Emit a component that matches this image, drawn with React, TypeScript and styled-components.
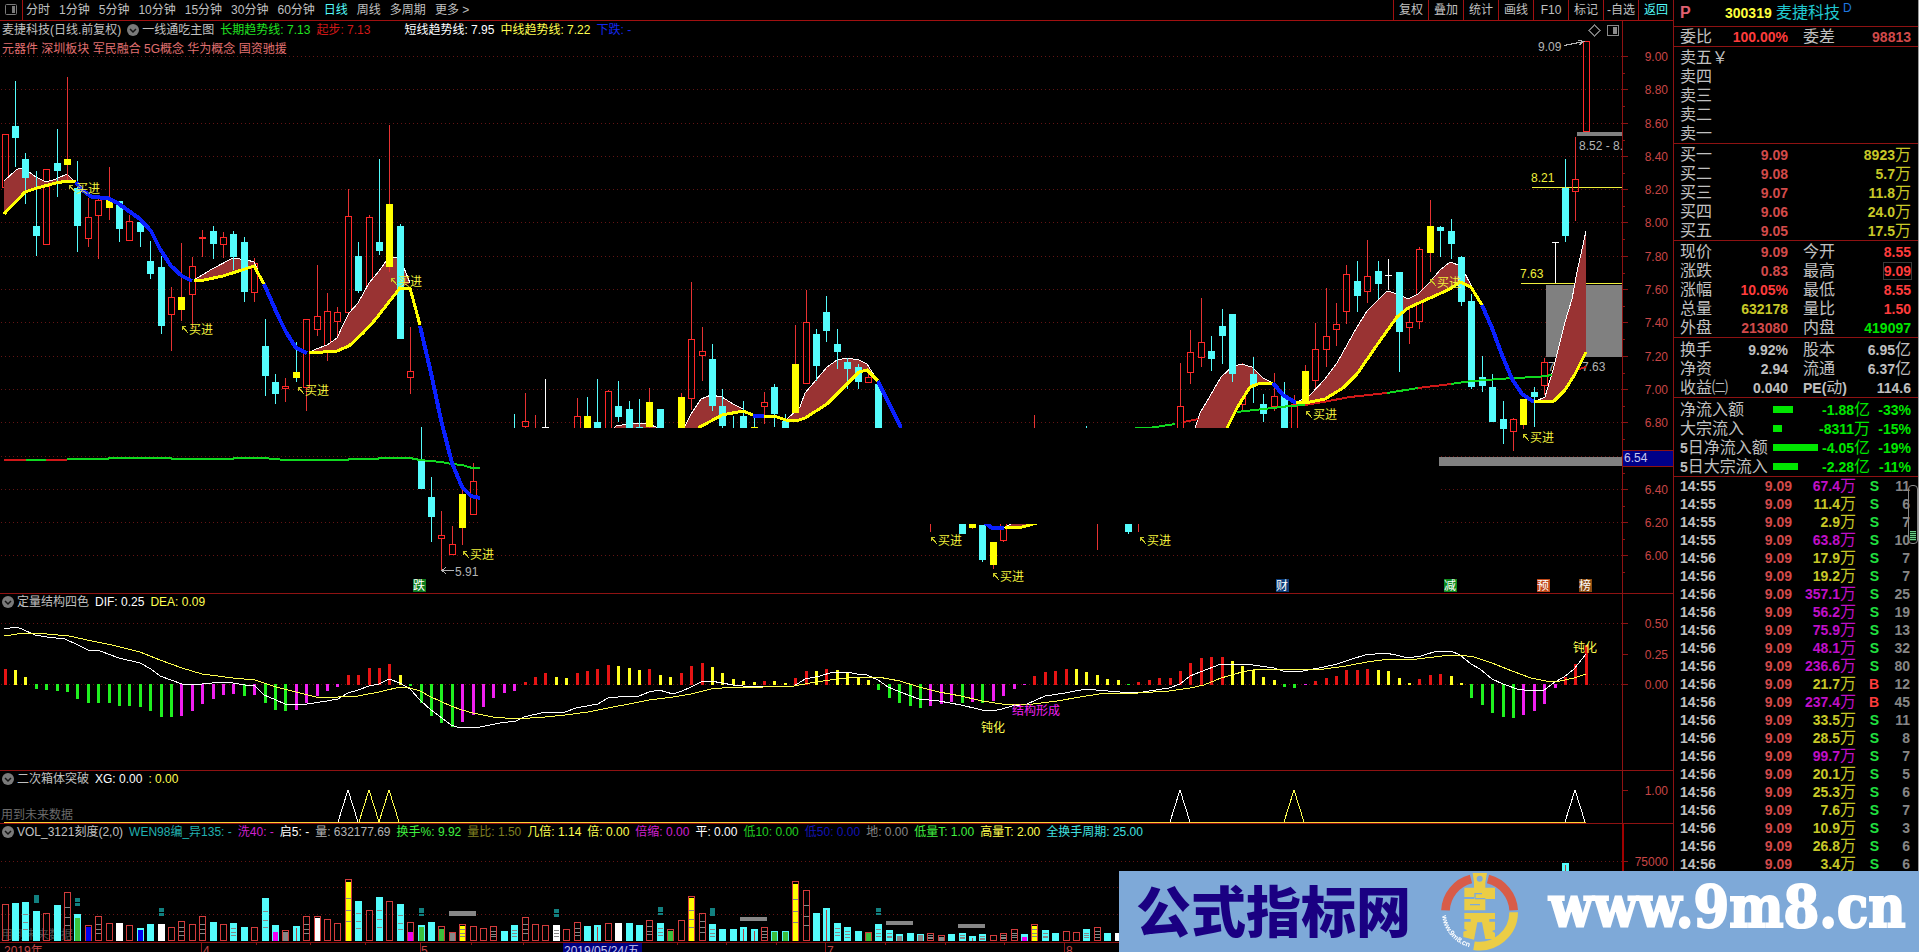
import React from "react";
import styled, { createGlobalStyle, css } from "styled-components";

/* ---------- theme ---------- */

const SANS = `"Liberation Sans", "Noto Sans CJK SC", sans-serif`;
const C = {
  line: "#8e1212",
  red: "#ff3c3c",
  dimRed: "#d24a4a",
  cyan: "#54fcfc",
  yellow: "#ffff00",
  blue: "#0a20ff",
  label: "#c0c0c0",
  green: "#00e600",
  magenta: "#f018f0",
  grey: "#868686",
  fill: "#993333",
  grid: "#641414",
};

const GlobalStyle = createGlobalStyle`
  * { box-sizing: border-box; }
  body { margin: 0; background: #000; color: ${C.label}; font: 12px/16px ${SANS}; overflow: hidden; }
  button { font: inherit; color: inherit; background: none; border: 0; padding: 0; margin: 0; cursor: pointer; white-space: nowrap; }
  table { border-collapse: collapse; border-spacing: 0; }
  td, th { padding: 0; font-weight: inherit; text-align: left; }
  svg { display: block; }
  svg text { font-family: ${SANS}; font-size: 12px; }
`;

/* ---------- layout ---------- */

const Page = styled.div`
  display: flex;
  height: 100vh;
  min-height: 600px;
  overflow: hidden;
`;

const Main = styled.main`
  flex: 1;
  min-width: 0;
  display: grid;
  grid-template-rows: 21px 573fr 177fr 53fr 119fr 9px;
`;

const Toolbar = styled.header`
  display: flex;
  justify-content: space-between;
  border-bottom: 1px solid #a01010;
`;

const ToolGroup = styled.nav`
  display: flex;
  align-items: center;
`;

const PanelToggle = styled.button`
  width: 23px;
  height: 20px;
  border-right: 1px solid #a01010;
  display: flex;
  align-items: center;
  justify-content: center;
`;

const Periods = styled(ToolGroup)`
  gap: 9px;
  padding-left: 3px;
  line-height: 20px;
`;

const Period = styled.button<{ $on?: boolean }>`
  color: ${(p) => (p.$on ? C.cyan : C.label)};
`;

const Tool = styled.button<{ $on?: boolean }>`
  width: 35px;
  height: 20px;
  border-left: 1px solid #a01010;
  color: ${(p) => (p.$on ? C.cyan : C.label)};
`;

const PaneRow = styled.section`
  display: grid;
  grid-template-columns: minmax(0, 1fr) 51px;
  min-height: 0;
  border-bottom: 1px solid ${C.line};
`;

const Plot = styled.div`
  display: grid;
  grid-template: minmax(0, 1fr) / minmax(0, 1fr);
  overflow: hidden;
  > * {
    grid-area: 1 / 1;
    min-width: 0;
    min-height: 0;
  }
`;

const Axis = styled.div<{ $strong?: boolean }>`
  border-left: ${(p) => (p.$strong ? 2 : 1)}px solid ${(p) => (p.$strong ? "#a00000" : C.line)};
  overflow: hidden;
`;

const Canvas = styled.svg`
  width: 100%;
  height: 100%;
`;

const Legends = styled.div`
  z-index: 1;
  align-self: start;
  display: flex;
  flex-direction: column;
  gap: 3px;
`;

const Legend = styled.div<{ $compact?: boolean }>`
  display: flex;
  align-items: center;
  gap: 6px;
  height: ${(p) => (p.$compact ? 15 : 17)}px;
  padding-left: 2px;
  white-space: nowrap;
`;

const Item = styled.span<{ $c?: string; $gap?: number }>`
  color: ${(p) => p.$c ?? C.label};
  margin-right: ${(p) => p.$gap ?? 0}px;
`;

const Fold = styled.button`
  display: block;
  width: 12px;
  height: 12px;
  margin-right: -3px;
`;

const FutureNote = styled.div<{ $dark?: boolean }>`
  align-self: end;
  padding: 0 0 ${(p) => (p.$dark ? 0 : 1)}px 1px;
  line-height: 14px;
  color: ${(p) => (p.$dark ? "#484848" : "#6a6a6a")};
`;

const DateRow = styled.div`
  overflow: hidden;
`;

/* ---------- side panel ---------- */

const Side = styled.aside`
  width: 246px;
  border-left: 1px solid ${C.line};
  border-right: 1px solid #9a9a9a;
  overflow: hidden;
  font-size: 16px;
`;

const Title = styled.h1`
  display: flex;
  align-items: center;
  height: 27px;
  margin: 0;
  padding-left: 6px;
  border-bottom: 1px solid ${C.line};
  font-size: 16px;
  font-weight: 400;
`;

const TitleMark = styled.span`
  width: 45px;
  color: #e06070;
  font-weight: 700;
`;

const TitleCode = styled.span`
  width: 51px;
  font-size: 14px;
  font-weight: 700;
  color: #ffff3c;
`;

const TitleName = styled.span`
  width: 67px;
  color: #20c8d0;
`;

const TitleTag = styled.span`
  align-self: flex-start;
  font-size: 12px;
  color: #1e78e0;
`;

const Block = styled.div<{ $pad?: number }>`
  padding: ${(p) => p.$pad ?? 1}px 7px 0 6px;
  border-bottom: 1px solid ${C.line};
`;

const Quotes = styled.table`
  width: 100%;
  table-layout: fixed;
  td,
  th {
    height: 19px;
    line-height: 19px;
    white-space: nowrap;
  }
`;

const Num = styled.td<{ $c?: string }>`
  color: ${(p) => p.$c ?? C.label};
  && {
    text-align: right;
  }
`;

const Digits = styled.span<{ $boxed?: boolean }>`
  font-size: 14px;
  line-height: 1;
  font-weight: 700;
  ${(p) =>
    p.$boxed &&
    css`
      outline: 1px solid #3a3a3a;
    `}
`;

const Second = styled.th`
  && {
    padding-left: 15px;
  }
`;

const FlowBar = styled.div`
  height: 7px;
  background: ${C.green};
`;

const TickArea = styled.div`
  display: grid;
  > * {
    grid-area: 1 / 1;
  }
`;

const Ticks = styled.table`
  width: 100%;
  table-layout: fixed;
  align-self: start;
  td {
    height: 18px;
    line-height: 18px;
    white-space: nowrap;
  }
  td:first-child {
    padding-left: 6px;
  }
  td:last-child {
    padding-right: 8px;
  }
`;

const ScrollThumb = styled.div`
  justify-self: end;
  display: flex;
  align-items: flex-end;
  justify-content: center;
  width: 10px;
  height: 59px;
  margin-top: 8px;
  padding-bottom: 2px;
  border: 1px solid #8a8a8a;
  border-radius: 4px;
`;

const ThumbGrip = styled.div`
  width: 6px;
  height: 10px;
  background: repeating-linear-gradient(#6fd08a 0 1px, #0a3a18 1px 2px);
`;

/* ---------- banner ---------- */

const Banner = styled.a`
  position: fixed;
  right: 0;
  bottom: 0;
  display: flex;
  align-items: center;
  width: 800px;
  height: 81px;
  padding-left: 17px;
  background: #7ea9d8;
  text-decoration: none;
  white-space: nowrap;
`;

const BannerName = styled.span`
  width: 304px;
  font: 900 55px/81px "Noto Sans CJK SC", sans-serif;
  color: #1a0082;
  padding-bottom: 6px;
`;

const BannerSite = styled.span`
  margin-left: 30px;
  font: 700 57px/72px "DejaVu Serif Condensed", "DejaVu Serif", serif;
  font-stretch: condensed;
  color: #fff;
  -webkit-text-stroke: 2px #fff;
  padding-bottom: 10px;
`;

/* ---------- chart data ---------- */

const STEP = 10.403;
const X = (i: number) => Math.round(4.5 + STEP * i);

/* index, kind, high, body top, body bottom, low */
type Candle = [number, string, number, number, number, number];
const parse = (s: string): Candle[] =>
  s
    .trim()
    .split(/\s*;\s*/)
    .map((r) => {
      const p = r.split(" ");
      return [+p[0], p[1], +p[2], +p[3], +p[4], +p[5]];
    });

const CANDLES = parse(
  `0 r 134 134 188 210;1 c 81 126 138 167;2 c 153 159 178 204;3 c 171 226 236 256;4 r 169 169 245 245;5 c 129 163 171 197;6 y 77 159 165 180;7 c 161 188 226 252;8 r 198 217 239 247;9 r 197 200 216 259;10 y 167 199 208 220;11 c 201 201 229 242;12 r 215 221 241 241;13 c 222 222 232 247;14 c 241 261 274 279;15 c 256 267 326 334;16 r 287 297 315 351;17 y 243 297 310 321;18 r 257 266 295 328;19 r 230 237 239 257;20 c 226 231 244 259;21 r 232 237 245 258;22 c 231 234 257 270;23 c 237 242 292 302;24 r 258 263 293 302;25 c 319 346 376 396;26 c 374 382 394 404;27 r 378 386 389 402;28 yc 342 372 378 382;29 r 319 319 388 411;30 r 265 316 330 336;31 r 293 311 347 361;32 r 307 312 322 350;33 r 189 216 313 330;34 c 242 256 291 293;35 r 215 217 291 304;36 c 159 242 251 255;37 y 125 204 267 272;38 c 224 226 339 339;39 r 327 371 378 394;40 c 427 461 489 489;41 c 477 497 517 542;42 r 511 535 539 570;43 r 526 544 555 555;44 y 490 494 528 545;45 r 463 481 515 515;49 c 414 440 450 460;50 r 393 421 427 430;51 r 415 440 450 460;52 w 379 427 427 460;55 r 398 416 450 450;56 yc 397 416 450 450;57 c 379 422 450 450;58 r 390 391 450 450;59 c 381 406 417 422;60 c 401 409 450 450;61 c 399 427 450 450;62 y 388 402 427 440;63 c 409 409 450 450;65 y 393 397 450 450;66 r 282 339 399 410;67 r 327 351 356 381;68 c 344 359 406 411;69 c 389 406 426 440;70 c 416 440 450 450;71 c 401 416 428 440;72 yc 416 427 450 450;73 r 392 402 407 424;74 c 384 387 414 427;75 c 414 421 450 450;76 y 325 364 413 413;77 r 290 322 384 384;78 c 329 334 366 381;79 c 296 312 331 342;80 c 329 344 352 369;81 c 358 362 369 389;82 c 364 367 382 389;83 r 374 377 383 383;84 c 384 384 450 450;89 r 500 500 510 532;92 c 500 500 534 534;93 y 500 500 528 529;94 c 525 525 560 562;95 y 542 542 565 569;96 r 500 500 541 542;99 r 415 440 450 450;104 c 426 440 450 450;105 r 500 500 501 550;108 c 500 500 532 534;109 r 500 500 501 532;113 r 363 406 450 450;114 r 330 352 373 384;115 r 298 342 358 367;116 c 336 351 359 371;117 c 309 326 336 364;118 c 314 314 374 382;119 r 363 387 405 410;120 c 357 374 386 403;121 c 394 404 414 422;122 r 373 396 407 411;123 c 382 396 450 450;124 r 395 404 450 450;125 y 365 371 403 403;126 r 323 349 381 390;127 r 288 336 350 367;128 r 303 324 330 346;129 r 265 274 312 324;130 c 261 281 296 312;131 r 240 276 292 303;132 c 261 271 284 299;133 w 259 275 275 290;134 c 272 272 332 372;135 r 300 322 328 344;136 r 247 249 322 329;137 y 200 226 253 272;138 c 226 227 231 257;139 c 219 231 244 259;140 c 256 257 302 306;141 c 294 301 387 389;142 c 356 377 386 392;143 c 374 387 422 422;144 c 401 419 429 444;145 r 418 419 432 451;146 y 399 399 425 429;147 c 387 392 397 427;148 r 358 362 386 395;149 w 242 242 242 283;150 c 159 188 236 242;151 r 137 179 192 221;152 r 41 41 132 132`
);

const FILLS: [string, string][] = [
  ["4,181 16,170 20,168 25,169 36,177 46,182 56,179 67,174 76,183", "67,181 56,183 37,188 25,192 4,214"],
  ["194,280 212,269 233,258 247,260 254,262 258,270", "254,266 245,269 223,276 204,280"],
  ["309,353 316,349 327,345 337,338 343,325 349,313 358,303 369,283 379,271 389,257 400,258 410,283", "400,288 389,302 375,320 363,333 349,346 337,351"],
  ["610,432 616,426 628,424 646,423 656,427 660,432", ""],
  ["684,428 691,414 701,399 711,395 722,397 733,404 743,409", "722,415 711,421 698,428"],
  ["786,420 800,407 805,393 816,380 827,367 837,360 847,358 859,360 867,364 878,381", "867,370 859,372 847,384 827,404 805,418 796,421"],
  ["1004,528 1012,523 1037,523", "1022,527"],
  ["1195,428 1200,413 1210,396 1221,377 1232,367 1241,364 1252,367 1263,378 1273,383", "1258,384 1250,387 1237,408 1227,428"],
  ["1296,403 1310,395 1325,379 1337,363 1347,345 1357,327 1367,311 1378,300 1387,291 1398,294 1408,299 1418,294 1429,283 1440,270 1450,262 1461,266 1472,287", "1460,282 1450,289 1430,298 1408,308 1397,317 1377,345 1357,374 1343,388 1325,399 1310,402"],
  ["1534,402 1545,397 1553,370 1565,322 1572,299 1577,272 1586,231", "1586,352 1575,374 1565,390 1554,401"],
];

const TREND: [string, string][] = [
  ["y", "4,214 25,192 37,188 56,183 67,181 76,182"],
  ["b", "76,182 82,190 92,197 108,198 119,204 140,219 151,231 160,249 171,266 182,276 192,281"],
  ["y", "194,281 204,280 223,276 245,269 254,266 264,284"],
  ["b", "264,284 279,318 286,332 296,348 307,353"],
  ["y", "309,353 337,351 349,346 363,333 375,320 389,302 400,288 410,288 420,325"],
  ["b", "420,326 431,373 441,420 452,463 462,487 471,496 480,498"],
  ["y", "698,428 711,421 722,415 743,411 753,415"],
  ["b", "753,416 764,416"],
  ["y", "764,416 774,416 786,420 796,421 805,418 827,404 847,384 859,372 867,370 878,381"],
  ["b", "878,381 901,428"],
  ["b", "984,522 992,528 1004,528"],
  ["y", "1005,528 1022,527 1037,523"],
  ["y", "1227,428 1237,408 1250,387 1258,384 1273,383"],
  ["b", "1273,383 1283,395 1296,403"],
  ["y", "1296,403 1310,402 1325,399 1343,388 1357,374 1377,345 1397,317 1408,308 1430,298 1450,289 1460,282 1471,287 1482,305"],
  ["b", "1482,305 1492,328 1502,355 1512,379 1522,394 1534,402"],
  ["y", "1534,402 1554,401 1565,390 1575,374 1586,352"],
];

const LONG: [string, string][] = [
  ["r", "4,460 26,460"],
  ["g", "26,460 46,460"],
  ["r", "46,460 67,460"],
  ["g", "67,459 108,459 109,458 171,458 172,459 233,459 234,458 264,458 285,460 348,460 349,459 378,459 379,458 410,458 420,460 441,462 452,464 462,465 472,468 480,468"],
  ["g", "1135,428 1149,428 1175,424"],
  ["r", "1184,422 1198,419"],
  ["g", "1237,412 1290,406 1305,405"],
  ["r", "1305,405 1323,402 1350,397 1387,393"],
  ["g", "1387,393 1418,388"],
  ["r", "1418,388 1451,384"],
  ["g", "1451,384 1471,381 1487,380 1513,378 1538,377 1552,375"],
  ["r", "1579,369 1586,367"],
];

const BUYS: [number, number][] = [
  [69, 185], [182, 326], [298, 387], [391, 278], [463, 551], [931, 537], [993, 573], [1140, 537], [1430, 279], [1306, 411], [1523, 434],
];

const EVENTS: [number, string, string][] = [
  [413, "跌", "#0c7a1c"], [1276, "财", "#0c3c78"], [1444, "减", "#0c8a1c"], [1537, "预", "#c04818"], [1579, "榜", "#8a4a10"],
];

const PRICES: [string, number][] = [
  ["9.00", 56], ["8.80", 89], ["8.60", 123], ["8.40", 156], ["8.20", 189], ["8.00", 222], ["7.80", 256], ["7.60", 289],
  ["7.40", 322], ["7.20", 356], ["7.00", 389], ["6.80", 422], ["6.60", 456], ["6.40", 489], ["6.20", 522], ["6.00", 555],
];

const HIST =
  "R16 Y15 Y8 G5 G6 G7 G8 G15 G19 G19 G19 G22 G22 G23 G27 G33 G33 M32 M27 M20 M15 M11 M10 G12 M11 G19 G26 G27 M26 M19 M12 M7 M3 R10 R10 R17 R17 R21 Y10 G2 G19 G32 G39 G43 M38 M31 M23 M14 M9 M7 R3 R8 R12 Y8 Y7 R12 R14 R16 R20 Y19 Y17 Y15 R16 Y10 Y8 R12 R19 R22 Y18 Y12 Y6 Y4 Y3 R4 Y4 Y2 R7 R14 Y14 R16 Y15 Y12 Y8 Y5 G6 G14 G19 G22 G24 M22 M20 M18 G19 M18 G19 M17 M12 M5 M1 R9 R13 R14 R16 Y16 Y13 Y10 Y6 Y5 G1 R3 R5 R7 R7 R14 R22 R27 R28 R28 Y24 Y19 Y15 Y8 Y5 G3 G4 M1 R4 R7 R9 R15 R15 R16 Y15 Y14 Y7 Y2 R6 R10 R11 Y9 Y2 G14 G21 G29 G33 G34 M31 M27 M20 M4 R8 R21 R40".split(" ");
const HIST_COLOR: Record<string, string> = { R: "#e61414", Y: "#ffff20", G: "#20f020", M: "#f020f0" };

const DIF =
  "4,629 16,627 22,629 35,635 47,637 65,639 78,645 88,650 100,651 119,658 140,663 151,669 160,676 171,680 182,684 194,685 202,684 222,682 233,683 245,685 255,686 264,695 276,700 285,704 296,705 307,704 327,701 338,699 348,693 358,690 369,686 379,684 389,679 400,683 410,689 420,700 431,710 442,718 451,725 457,727 480,727 500,723 516,721 524,717 545,712 565,712 576,708 598,704 608,698 618,697 639,696 649,692 659,690 673,694 682,691 691,687 701,682 711,681 722,683 733,685 753,687 774,686 794,686 805,679 820,676 833,672 847,672 857,674 867,675 878,680 888,687 900,692 919,699 939,701 961,705 982,710 992,711 1002,709 1012,706 1027,704 1045,696 1065,693 1086,689 1096,690 1120,692 1138,693 1149,691 1169,688 1180,684 1190,676 1200,672 1221,664 1242,664 1253,665 1274,668 1283,671 1303,671 1324,667 1337,664 1349,660 1365,655 1385,653 1396,655 1408,658 1421,656 1437,651 1451,651 1460,655 1471,664 1480,669 1492,679 1503,684 1517,689 1531,691 1544,690 1555,682 1564,677 1574,669 1586,654";
const DEA =
  "4,636 24,633 47,634 69,636 92,641 112,645 140,652 160,660 182,668 202,674 233,678 255,680 276,687 296,692 316,697 338,697 358,696 379,692 400,687 410,688 420,691 431,697 451,706 462,710 473,713 493,717 516,719 545,717 565,715 588,712 608,708 629,704 639,702 649,700 673,697 691,694 711,689 733,687 763,687 794,686 816,682 837,679 857,677 878,677 900,681 919,687 939,692 961,696 982,701 1002,704 1033,704 1057,701 1086,696 1106,693 1138,693 1169,691 1190,688 1204,685 1221,678 1242,672 1253,670 1272,669 1292,670 1324,669 1346,666 1367,662 1389,659 1417,659 1442,656 1460,655 1474,657 1492,663 1512,671 1531,678 1546,681 1560,681 1574,678 1586,674";

const PEAKS: [number, string][] = [
  [33, "#fff"], [35, "#ffff50"], [37, "#ffff50"], [113, "#fff"], [124, "#ffff50"], [151, "#fff"],
];

/* volume bars: outline kind and inner kind, optional S for ruled bars, top, optional inner top */
const VOLUMES =
  "r904 c903 cS902 c911 r913 c905 rS892 cg914:918 rb925:927 rS916 r923 w923 r925 cb928:930 c924 w924 r927 rS921 r924 rS916 c922 r924 cS923 c927 r927 cS898 cm925:932 rx930:932 cl926 rS916 rw916:918 r919 r923 ryS879:882 cS901 r910 cS897 r901 cS904 rm922:932 cg925:927 c922 rg926:929 rx932:933 ryS924:926 r926 r928 rS926 c931 cS925 rS917 r924 r925 wS925 r929 rS922 c926 cl925 r923 w923 c923 c925 rS920 cS923 rg929:931 r920 ryS896:898 rS913 cS924 c929 c929 cl927 cl929 rS927 cg931:932 cg931:932 ryS881:884 rS890 c913 cl908 cS923 cS927 c931 rg932:933 cS924 cS930 cx934:936 c933 cx934:935 rS933 rx935:937 c934 cS933 cl936 cS934 r935 rS933 rS929 cm934:937 ryS924:926 cS930 c933 r931 r932 cS929 rS927 c933 w933 c930 r928 c932 r931 c929 r930 c932 r925 c928 r924 c931 r930 r929 c926 c930 r931 r929 c930 c931 r928 c929 r925 c922 r930 r926 c927 r929 c928 r918 c926 r921 c929 r930 c924 r925 c928 r929 c930 r927 c931 r929 c928 cl863 r880 r885".split(
    " "
  );
const INNER: Record<string, string> = { g: "#3cc03c", b: "#0000f0", m: "#f000f0", x: "#868686", w: "#fff", y: "#ffff00" };

const MARKS: [number, number, number][] = [
  [3, 895, 8], [7, 898, 4], [7, 903, 3], [15, 908, 4], [15, 913, 3], [40, 908, 5], [40, 914, 2], [53, 909, 4], [53, 914, 3], [63, 907, 5], [63, 913, 2], [68, 908, 8], [84, 908, 4], [84, 913, 2],
];

/* ---------- small pieces ---------- */

const Mixed = ({ text, boxed }: { text: string; boxed?: boolean }) => (
  <>
    {(text.match(/[\u3000-\u9fff]+|[^\u3000-\u9fff]+/g) || []).map((t, k) =>
      /[\u3000-\u9fff]/.test(t) ? t : (
        <Digits key={k} $boxed={boxed}>
          {t}
        </Digits>
      )
    )}
  </>
);

const FoldButton = ({ name }: { name: string }) => (
  <Fold aria-label={name}>
    <svg width="12" height="12" viewBox="0 0 12 12">
      <circle cx="6" cy="6" r="6" fill="#7a7a7a" />
      <path d="M3 5l3 3 3-3" stroke="#141414" strokeWidth="1.5" fill="none" />
    </svg>
  </Fold>
);

const GridLines = ({ ys }: { ys: number[] }) => (
  <g stroke={C.grid} strokeDasharray="1 3">
    {ys.map((y) => (
      <line key={y} x1="1" x2="1622" y1={y + 0.5} y2={y + 0.5} />
    ))}
  </g>
);

const Candlestick = ({ d: [i, k, hi, top, bot, lo] }: { d: Candle }) => {
  const x = X(i);
  if (k === "w")
    return (
      <g fill="#fff">
        <rect x={x} y={hi} width="1" height={lo - hi} />
        <rect x={x - 3} y={top} width="7" height="1" />
      </g>
    );
  const body = k === "c" ? C.cyan : C.yellow;
  const wick = k === "c" || k === "yc" ? C.cyan : "#e63232";
  return (
    <g>
      <rect x={x} y={hi} width="1" height={Math.max(0, top - hi)} fill={wick} />
      <rect x={x} y={bot} width="1" height={Math.max(0, lo - bot)} fill={wick} />
      {k === "r" ? (
        <rect x={x - 2.5} y={top + 0.5} width="6" height={Math.max(1, bot - top - 1)} fill="none" stroke="#ff2828" />
      ) : (
        <rect x={x - 3} y={top} width="7" height={bot - top} fill={body} />
      )}
    </g>
  );
};

const Buy = ({ x, y }: { x: number; y: number }) => (
  <g>
    <path d={`M${x + 6} ${y + 7}L${x} ${y}M${x} ${y + 4}V${y}H${x + 4}`} stroke="#c8c828" fill="none" />
    <text x={x + 7} y={y + 8} fill="#f0f03c">
      买进
    </text>
  </g>
);

const PriceChart = () => (
  <Canvas viewBox="0 21 1622 572" preserveAspectRatio="xMinYMin slice" shapeRendering="crispEdges" role="img" aria-label="日线主图">
    <GridLines ys={PRICES.map((p) => p[1])} />
    <g fill="#808080">
      <rect x="1546" y="285" width="76" height="72" />
      <rect x="1577" y="132" width="45" height="4" />
      <rect x="1439" y="457" width="183" height="9" />
    </g>
    <g fill="#b4b4b4">
      <text x="1579" y="150">8.52 - 8.55</text>
      <text x="1548" y="371">7.20 - 7.63</text>
    </g>
    <g stroke="#f0f03c">
      <line x1="1532" x2="1622" y1="187.5" y2="187.5" />
      <line x1="1521" x2="1622" y1="283.5" y2="283.5" />
    </g>
    <g fill="#f0f03c">
      <text x="1531" y="182">8.21</text>
      <text x="1520" y="278">7.63</text>
    </g>
    {CANDLES.filter((c) => c[1] === "r").map((c) => (
      <Candlestick key={c[0]} d={c} />
    ))}
    {FILLS.map(([up, low], k) => (
      <polygon key={k} points={`${up} ${low}`} fill={C.fill} />
    ))}
    {FILLS.map(([up], k) => (
      <polyline key={k} points={up} fill="none" stroke="#fff" />
    ))}
    {CANDLES.filter((c) => c[1] !== "r").map((c) => (
      <Candlestick key={c[0]} d={c} />
    ))}
    {LONG.map(([k, p], n) => (
      <polyline key={n} points={p} fill="none" stroke={k === "g" ? "#10d820" : "#d01818"} strokeWidth="2" />
    ))}
    {TREND.map(([k, p], n) => (
      <polyline key={n} points={p} fill="none" stroke={k === "y" ? C.yellow : C.blue} strokeWidth={k === "y" ? 3 : 4} />
    ))}
    <rect x="480" y="428" width="959" height="96" fill="#000" />
    {BUYS.map(([x, y]) => (
      <Buy key={x} x={x} y={y} />
    ))}
    <g stroke="#b4b4b4" fill="none">
      <path d="M442 570.5H454M446 567L442 570.5L446 574" />
      <path d="M1564 45.5L1584 41.5M1578 40L1584 41.5L1579 45" />
      <path d="M1594.5 25L1600 30.5L1594.5 36L1589 30.5Z" stroke="#7a7a7a" />
    </g>
    <g fill="#b4b4b4">
      <text x="455" y="576">5.91</text>
      <text x="1538" y="51">9.09</text>
    </g>
    <rect x="1607.5" y="25.5" width="11" height="10" rx="1" fill="none" stroke="#8a8a8a" />
    <rect x="1613" y="27" width="4" height="7" fill="#8a8a8a" />
    {EVENTS.map(([x, t, bg]) => (
      <g key={t}>
        <rect x={x} y="579" width="13" height="13" fill={bg} />
        <text x={x} y="590" fill="#fff">
          {t}
        </text>
      </g>
    ))}
  </Canvas>
);

const AxisScale = ({ box, labels, minor = [], mark }: { box: string; labels: [string, number][]; minor?: number[]; mark?: boolean }) => (
  <Canvas viewBox={box} preserveAspectRatio="xMinYMin slice" shapeRendering="crispEdges">
    {labels.map(([t, y]) => (
      <g key={t}>
        <rect x="0" y={y} width="5" height="1" fill={C.line} />
        {!(mark && t === "6.60") && (
          <text x="45" y={y + 5} textAnchor="end" fill="#c84646">
            {t}
          </text>
        )}
      </g>
    ))}
    {minor.map((y) => (
      <rect key={y} x="0" y={y} width="2" height="1" fill={C.line} />
    ))}
    {mark && (
      <g>
        <rect x="0" y="450" width="50" height="17" fill="#000088" />
        <rect x="0" y="450" width="50" height="1" fill={C.line} />
        <rect x="0" y="466" width="50" height="1" fill={C.line} />
        <text x="1" y="462" fill="#c8c8f0">
          6.54
        </text>
      </g>
    )}
  </Canvas>
);

const MacdChart = () => (
  <Canvas viewBox="0 594 1622 176" preserveAspectRatio="xMinYMin slice" shapeRendering="crispEdges" role="img" aria-label="定量结构四色">
    <GridLines ys={[623, 684]} />
    {HIST.map((h, i) => {
      const v = +h.slice(1);
      const up = h[0] === "R" || h[0] === "Y";
      return <rect key={i} x={X(i) - 1} y={up ? 685 - v : 684} width="3" height={v} fill={HIST_COLOR[h[0]]} />;
    })}
    <polyline points={DIF} fill="none" stroke="#fff" />
    <polyline points={DEA} fill="none" stroke="#ffff50" />
    <text x="981" y="732" fill="#ffff50">钝化</text>
    <text x="1012" y="715" fill="#f020f0">结构形成</text>
    <text x="1573" y="652" fill="#ffff50">钝化</text>
  </Canvas>
);

const BoxChart = () => (
  <Canvas viewBox="0 771 1622 52" preserveAspectRatio="xMinYMin slice" shapeRendering="crispEdges" role="img" aria-label="二次箱体突破">
    {PEAKS.map(([i, c]) => (
      <polyline key={i} points={`${X(i) - 10},822 ${X(i)},790 ${X(i) + 10},822`} fill="none" stroke={c} />
    ))}
    <rect x="4" y="822" width="1582" height="1" fill="#ffd030" />
  </Canvas>
);

const VolumeBar = ({ i, v }: { i: number; v: string }) => {
  const m = v.match(/^([a-z]+)(S?)(\d+)(?::(\d+))?$/)!;
  const [, kinds, ruled, topS, innerS] = m;
  const x = X(i);
  const top = +topS;
  const inner = innerS ? +innerS : 0;
  return (
    <g>
      {kinds[0] === "r" ? (
        <rect x={x - 2.5} y={top + 0.5} width="6" height={940 - top} fill="none" stroke="#d23c3c" />
      ) : (
        <rect x={x - 3} y={top} width="7" height={941 - top} fill={kinds[0] === "w" ? "#fff" : C.cyan} />
      )}
      {inner > 0 && <rect x={x - 2} y={inner} width="5" height={941 - inner} fill={INNER[kinds[1]]} />}
      {kinds[1] === "l" && <rect x={x} y={top + 2} width="1" height={939 - top} fill="#b04040" />}
      {ruled &&
        [0.3, 0.5, 0.68].map((f) => (
          <rect key={f} x={x - 2} y={Math.round(top + (941 - top) * f)} width="5" height="1" fill="#868686" />
        ))}
    </g>
  );
};

const VolumeChart = () => (
  <Canvas viewBox="0 824 1622 118" preserveAspectRatio="xMinYMin slice" shapeRendering="crispEdges" role="img" aria-label="成交量">
    <GridLines ys={[861, 887, 914]} />
    {MARKS.map(([i, y, h]) => (
      <rect key={`${i}-${y}`} x={X(i) - 2} y={y} width="5" height={h} fill="#128080" />
    ))}
    <g fill="#868686">
      <rect x="449" y="911" width="27" height="5" />
      <rect x="740" y="917" width="27" height="4" />
      <rect x="886" y="921" width="27" height="4" />
      <rect x="958" y="924" width="27" height="4" />
    </g>
    {VOLUMES.map((v, i) => (
      <VolumeBar key={i} i={i} v={v} />
    ))}
  </Canvas>
);

const DateAxis = () => (
  <Canvas viewBox="0 943 1673 9" preserveAspectRatio="xMinYMin slice" shapeRendering="crispEdges">
    {[256, 310, 365, 471, 523, 677, 726, 776, 885, 945, 1004].map((x) => (
      <rect key={x} x={x} y="943" width="1" height="2" fill={C.line} />
    ))}
    {[201, 420, 825, 1064].map((x) => (
      <rect key={x} x={x} y="943" width="1" height="9" fill={C.line} />
    ))}
    <g fill="#c84646">
      <text x="4" y="955">2019年</text>
      <text x="203" y="955">4</text>
      <text x="421" y="955">5</text>
      <text x="827" y="955">7</text>
      <text x="1066" y="955">8</text>
    </g>
    <rect x="563" y="943" width="79" height="9" fill="#000080" />
    <text x="564" y="955" fill="#c8c8f0">
      2019/05/24/五
    </text>
  </Canvas>
);

/* ---------- side data ---------- */

type Cell = [string, string, string, string, string, string];
const Rows = ({ rows }: { rows: Cell[] }) => (
  <Quotes>
    <colgroup>
      <col style={{ width: 50 }} />
      <col style={{ width: 58 }} />
      <col style={{ width: 66 }} />
      <col />
    </colgroup>
    <tbody>
      {rows.map(([l, v, c, l2, v2, c2]) => (
        <tr key={l}>
          <th scope="row">{l}</th>
          <Num $c={c}>
            <Mixed text={v} />
          </Num>
          <Second scope="row">{l2 === "PE(动)" ? <Mixed text={l2} /> : l2}</Second>
          <Num $c={c2}>
            <Mixed text={v2} boxed={l2 === "最高"} />
          </Num>
        </tr>
      ))}
    </tbody>
  </Quotes>
);

const VY = "#c8c828";
const W = C.label;
const BUY_ROWS: Cell[] = [
  ["买一", "9.09", C.dimRed, "", "8923万", VY],
  ["买二", "9.08", C.dimRed, "", "5.7万", VY],
  ["买三", "9.07", C.dimRed, "", "11.8万", VY],
  ["买四", "9.06", C.dimRed, "", "24.0万", VY],
  ["买五", "9.05", C.dimRed, "", "17.5万", VY],
];
const PRICE_ROWS: Cell[] = [
  ["现价", "9.09", C.dimRed, "今开", "8.55", C.red],
  ["涨跌", "0.83", C.dimRed, "最高", "9.09", C.red],
  ["涨幅", "10.05%", C.red, "最低", "8.55", C.red],
  ["总量", "632178", VY, "量比", "1.50", C.red],
  ["外盘", "213080", C.dimRed, "内盘", "419097", C.green],
];
const BASE_ROWS: Cell[] = [
  ["换手", "9.92%", W, "股本", "6.95亿", W],
  ["净资", "2.94", W, "流通", "6.37亿", W],
  ["收益㈡", "0.040", W, "PE(动)", "114.6", W],
];
const FLOW: [string, number, string, string][] = [
  ["净流入额", 20, "-1.88亿", "-33%"],
  ["大宗流入", 9, "-8311万", "-15%"],
  ["5日净流入额", 45, "-4.05亿", "-19%"],
  ["5日大宗流入", 25, "-2.28亿", "-11%"],
];
const TICKS =
  "67.4 S 11,11.4 S 6,2.9 S 7,63.8 S 10,17.9 S 7,19.2 S 7,357.1 S 25,56.2 S 19,75.9 S 13,48.1 S 32,236.6 S 80,21.7 B 12,237.4 B 45,33.5 S 11,28.5 S 8,99.7 S 7,20.1 S 5,25.3 S 6,7.6 S 7,10.9 S 3,26.8 S 6,3.4 S 6"
    .split(",")
    .map((t) => t.split(" "));

const SidePanel = () => (
  <Side>
    <Title>
      <TitleMark>P</TitleMark>
      <TitleCode>300319</TitleCode>
      <TitleName>麦捷科技</TitleName>
      <TitleTag>D</TitleTag>
    </Title>
    <Block $pad={0}>
      <Rows rows={[["委比", "100.00%", C.red, "委差", "98813", C.dimRed]]} />
    </Block>
    <Block>
      <Rows rows={["卖五￥", "卖四", "卖三", "卖二", "卖一"].map((l): Cell => [l, "", W, "", "", W])} />
    </Block>
    <Block>
      <Rows rows={BUY_ROWS} />
    </Block>
    <Block>
      <Rows rows={PRICE_ROWS} />
    </Block>
    <Block $pad={2}>
      <Rows rows={BASE_ROWS} />
    </Block>
    <Block $pad={2}>
      <Quotes>
        <colgroup>
          <col style={{ width: 93 }} />
          <col style={{ width: 46 }} />
          <col style={{ width: 51 }} />
          <col />
        </colgroup>
        <tbody>
          {FLOW.map(([l, w, v, p]) => (
            <tr key={l}>
              <th scope="row">
                <Mixed text={l} />
              </th>
              <td>
                <FlowBar style={{ width: w }} />
              </td>
              <Num $c={C.green}>
                <Mixed text={v} />
              </Num>
              <Num $c={C.green}>
                <Mixed text={p} />
              </Num>
            </tr>
          ))}
        </tbody>
      </Quotes>
    </Block>
    <TickArea>
      <Ticks>
        <colgroup>
          <col style={{ width: 60 }} />
          <col style={{ width: 58 }} />
          <col style={{ width: 64 }} />
          <col style={{ width: 23 }} />
          <col />
        </colgroup>
        <tbody>
          {TICKS.map(([v, s, n], i) => (
            <tr key={i}>
              <td>
                <Digits>{i < 4 ? "14:55" : "14:56"}</Digits>
              </td>
              <Num $c={C.dimRed}>
                <Digits>9.09</Digits>
              </Num>
              <Num $c={+v > 40 ? "#c010c8" : VY}>
                <Mixed text={`${v}万`} />
              </Num>
              <Num $c={s === "S" ? "#20e040" : C.red}>
                <Digits>{s}</Digits>
              </Num>
              <Num $c={C.grey}>
                <Digits>{n}</Digits>
              </Num>
            </tr>
          ))}
        </tbody>
      </Ticks>
      <ScrollThumb>
        <ThumbGrip />
      </ScrollThumb>
    </TickArea>
  </Side>
);

const Emblem = () => (
  <svg width="79" height="79" viewBox="30 17 237 237" role="img" aria-label="9m8">
    <path d="M46.500 132A102 102 0 0 1 123 38" stroke="#d85c48" strokeWidth="26" fill="none" />
    <path d="M251 132A102 102 0 0 0 174 38" stroke="#d85c48" strokeWidth="26" fill="none" />
    <path d="M251 138A102 102 0 0 1 132 238" stroke="#ebcd46" strokeWidth="26" fill="none" />
    <path d="M128 20H171L166 48V64H195V98H166V132H103V98H132V92H103V64H132V48Z" fill="#ebcd46" />
    <circle cx="149" cy="37" r="9" fill="#7ea9d8" />
    <path d="M135 97H166M135 97V82H156M120 115H150" stroke="#7ea9d8" strokeWidth="4" fill="none" />
    <path d="M103 140H195V158H178V166H195V190L186 194L195 200V218H166L156 168H142L132 220L100 212V196L112 192L103 188V166H122V158H103Z" fill="#ebcd46" />
    <path id="emblem-arc" d="M36 148A113 113 0 0 0 134 246" fill="none" />
    <text fill="#fff" fontWeight="700" style={{ fontSize: 22 }}>
      <textPath href="#emblem-arc">www.9m8.cn</textPath>
    </text>
  </svg>
);

/* ---------- page ---------- */

const PERIODS = ["分时", "1分钟", "5分钟", "10分钟", "15分钟", "30分钟", "60分钟", "日线", "周线", "多周期", "更多 >"];
const TOOLS = ["复权", "叠加", "统计", "画线", "F10", "标记", "-自选", "返回"];
const VOL_LEGEND: [string, string][] = [
  ["WEN98编_异135: -", "#20b0b0"],
  ["洗40: -", "#d020d0"],
  ["启5: -", "#fff"],
  ["量: 632177.69", "#b4b4b4"],
  ["换手%: 9.92", "#40f040"],
  ["量比: 1.50", "#808020"],
  ["几倍: 1.14", "#ffff50"],
  ["倍: 0.00", "#ffff50"],
  ["倍缩: 0.00", "#d020d0"],
  ["平: 0.00", "#fff"],
  ["低10: 0.00", "#20d020"],
  ["低50: 0.00", "#1414b4"],
  ["地: 0.00", "#868686"],
  ["低量T: 1.00", "#40f040"],
  ["高量T: 2.00", "#ffff50"],
  ["全换手周期: 25.00", "#40e0e0"],
];

export default function App() {
  return (
    <>
      <GlobalStyle />
      <Page>
        <Main>
          <Toolbar>
            <ToolGroup aria-label="周期">
              <PanelToggle aria-label="侧栏">
                <svg width="13" height="12" viewBox="0 0 13 12">
                  <rect x=".5" y=".5" width="11" height="10" rx="1" fill="none" stroke="#7a7a7a" />
                  <rect x="7" y="2" width="3" height="7" fill="#7a7a7a" />
                </svg>
              </PanelToggle>
              <Periods as="div">
                {PERIODS.map((p) => (
                  <Period key={p} $on={p === "日线"}>
                    {p}
                  </Period>
                ))}
              </Periods>
            </ToolGroup>
            <ToolGroup aria-label="工具">
              {TOOLS.map((t) => (
                <Tool key={t} $on={t === "返回"}>
                  {t}
                </Tool>
              ))}
            </ToolGroup>
          </Toolbar>

          <PaneRow>
            <Plot>
              <PriceChart />
              <Legends>
                <Legend>
                  <Item>麦捷科技(日线.前复权)</Item>
                  <FoldButton name="主图指标" />
                  <Item>一线通吃主图</Item>
                  <Item $c="#20e020">长期趋势线: 7.13</Item>
                  <Item $c="#d01818" $gap={28}>
                    起步: 7.13
                  </Item>
                  <Item $c="#fff">短线趋势线: 7.95</Item>
                  <Item $c="#ffff50">中线趋势线: 7.22</Item>
                  <Item $c="#1428f0">下跌: -</Item>
                </Legend>
                <Legend $compact>
                  <Item $c="#e07070">元器件 深圳板块 军民融合 5G概念 华为概念 国资驰援</Item>
                </Legend>
              </Legends>
            </Plot>
            <Axis>
              <AxisScale box="0 21 50 572" labels={PRICES} minor={PRICES.map((p) => p[1] + 17)} mark />
            </Axis>
          </PaneRow>

          <PaneRow>
            <Plot>
              <MacdChart />
              <Legend $compact>
                <FoldButton name="定量结构四色" />
                <Item>定量结构四色</Item>
                <Item $c="#fff">DIF: 0.25</Item>
                <Item $c="#ffff50">DEA: 0.09</Item>
              </Legend>
            </Plot>
            <Axis>
              <AxisScale box="0 594 50 176" labels={[["0.50", 623], ["0.25", 654], ["0.00", 684]]} />
            </Axis>
          </PaneRow>

          <PaneRow>
            <Plot>
              <BoxChart />
              <Legend $compact>
                <FoldButton name="二次箱体突破" />
                <Item>二次箱体突破</Item>
                <Item $c="#fff">XG: 0.00</Item>
                <Item $c="#ffff50">: 0.00</Item>
              </Legend>
              <FutureNote>用到未来数据</FutureNote>
            </Plot>
            <Axis>
              <AxisScale box="0 771 50 52" labels={[["1.00", 790]]} />
            </Axis>
          </PaneRow>

          <PaneRow>
            <Plot>
              <FutureNote $dark>用到未来数据</FutureNote>
              <VolumeChart />
              <Legend $compact>
                <FoldButton name="成交量" />
                <Item>VOL_3121刻度(2,0)</Item>
                {VOL_LEGEND.map(([t, c]) => (
                  <Item key={t} $c={c}>
                    {t}
                  </Item>
                ))}
              </Legend>
            </Plot>
            <Axis $strong>
              <AxisScale box="1 824 50 118" labels={[["75000", 861]]} />
            </Axis>
          </PaneRow>

          <DateRow>
            <DateAxis />
          </DateRow>
        </Main>
        <SidePanel />
      </Page>
      <Banner href="#">
        <BannerName>公式指标网</BannerName>
        <Emblem />
        <BannerSite>www.9m8.cn</BannerSite>
      </Banner>
    </>
  );
}
